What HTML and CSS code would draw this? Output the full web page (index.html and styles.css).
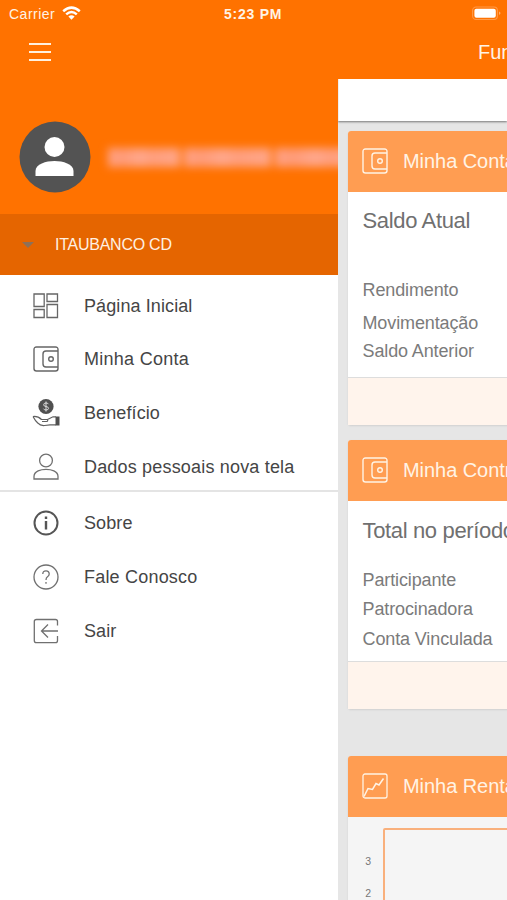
FILE: index.html
```html
<!DOCTYPE html>
<html lang="pt-BR">
<head>
<meta charset="utf-8">
<title>Minha Conta</title>
<link rel="stylesheet" href="styles.css">
</head>
<body>
<svg class="defs" width="0" height="0" aria-hidden="true">
  <symbol id="wallet" viewBox="0 0 26 26"><g fill="none" stroke="currentColor" stroke-width="1.400"><path d="M25 5V3.500Q25 1 22.500 1H3.500Q1 1 1 3.500V22.500Q1 25 3.500 25H22.500Q25 25 25 22.500V5H13Q10 5 10 8V18Q10 21 13 21H25"/><circle cx="18" cy="13" r="2.300"/></g></symbol>
</svg>
<div class="screen">
  <header class="top">
    <div class="status">
      <span class="carrier">Carrier</span>
      <svg class="wifi" width="19" height="14" viewBox="0 0 19 14"><g fill="none" stroke="#fff" stroke-width="2.500"><path d="M1.200 5.200Q9.500 -2 17.800 5.200"/><path d="M4.200 8.400Q9.500 3.600 14.800 8.400"/></g><path fill="#fff" d="M6.400 10.500Q9.500 7.800 12.600 10.500L9.500 13.700Z"/></svg>
      <span class="time">5:23 PM</span>
      <svg class="battery" width="30" height="15" viewBox="0 0 30 15"><rect x=".6" y="1" width="24.800" height="12.500" rx="3.500" fill="none" stroke="#ff9a48" stroke-width="1.100"/><rect x="2.400" y="2.800" width="21.400" height="8.900" rx="2" fill="#fff"/><path fill="#ffad68" d="M27 5.500Q30 7.200 27 9Z"/></svg>
    </div>
    <div class="bar">
      <svg width="24" height="20" viewBox="0 0 24 20"><path d="M1 2H23M1 10H23M1 18H23" stroke="#fff0df" stroke-width="2"/></svg>
      <span class="title">Fundação</span>
    </div>
  </header>
  <div class="body">
    <aside class="drawer">
      <div class="profile">
        <svg class="avatar" width="72" height="72" viewBox="0 0 72 72"><circle cx="36" cy="36" r="35.500" fill="#535353"/><circle cx="35.500" cy="26" r="10" fill="#fff"/><path fill="#fff" d="M16.500 55V50C16.500 43 27 40 35.500 40S54.500 43 54.500 50V55Z"/></svg>
        <div class="name"><i class="w1"></i><i class="w2"></i><i class="w3"></i></div>
      </div>
      <div class="plan"><i class="caret"></i><span>ITAUBANCO CD</span></div>
      <ul class="menu">
        <li><svg width="28" height="28" viewBox="0 0 28 28"><g fill="none" stroke="#666" stroke-width="1.300"><path d="M2 2H12.200V14.500H2ZM15 2H25.500V9.500H15ZM2 17.500H12.200V25.500H2ZM15 12.500H25.500V25.500H15Z"/></g></svg><span class="t1">Página Inicial</span></li>
        <li><svg class="wal" width="26" height="26"><use href="#wallet"/></svg><span class="t2">Minha Conta</span></li>
        <li><svg width="28" height="30" viewBox="0 0 28 30"><circle cx="14" cy="8.500" r="7.600" fill="#505050"/><path d="M16.500 6.200Q16 5 14 5Q11.700 5 11.700 6.800Q11.700 8.300 14 8.500Q16.500 8.800 16.500 10.300Q16.500 12 14 12Q12 12 11.500 10.700M14 3.500V13.500" fill="none" stroke="#ddd" stroke-width="1"/><path d="M1 18.500C5 18 7 19 9.500 21.500H15Q16.500 22.500 15 23.500H10M15.500 21.500L21 18.800H24M1 18.500Q3 22.500 6 25.200Q8 27.800 12.500 27.500L18 26.800H24" fill="none" stroke="#606060" stroke-width="1.200"/><path fill="#505050" d="M23.500 18.500H27.500V27.500H23.500Z"/></svg><span class="t3">Benefício</span></li>
        <li><svg width="28" height="28" viewBox="0 0 28 28"><g fill="none" stroke="#707070" stroke-width="1.300"><circle cx="14" cy="7.500" r="6.400"/><path d="M2 26V23.500C2 18 9 16.300 14 16.300S26 18 26 23.500V26Z"/></g></svg><span class="t4">Dados pessoais nova tela</span></li>
      </ul>
      <div class="divider"></div>
      <ul class="menu lower">
        <li><svg width="26" height="26" viewBox="0 0 26 26"><circle cx="13" cy="13" r="11.500" fill="none" stroke="#555" stroke-width="2"/><path fill="#555" d="M11.800 6.500H14.200V9H11.800ZM11.800 11H14.200V19.500H11.800Z"/></svg><span class="t5">Sobre</span></li>
        <li><svg width="26" height="26" viewBox="0 0 26 26"><g fill="none" stroke="#707070" stroke-width="1.300"><circle cx="13" cy="13" r="12"/><path d="M9.800 10Q9.800 6.800 13 6.800T16.200 10Q16.200 11.600 14.500 12.700Q13 13.700 13 16M13 18V19.700"/></g></svg><span class="t6">Fale Conosco</span></li>
        <li><svg width="26" height="26" viewBox="0 0 26 26"><path d="M24.500 7.500V3.500Q24.500 1.500 22.500 1.500H3.500Q1.300 1.500 1.300 3.500V22.500Q1.300 24.700 3.500 24.700H22.500Q24.500 24.700 24.500 22.500V18M25 13H8.500M15 6.500L8.500 13L15 19.500" fill="none" stroke="#707070" stroke-width="1.300"/></svg><span class="t7">Sair</span></li>
      </ul>
    </aside>
    <main class="page">
      <div class="tabs"></div>
      <section class="card">
        <h2><svg width="26" height="26"><use href="#wallet"/></svg><span>Minha Conta</span></h2>
        <div class="content balance">
          <p class="lead l1">Saldo Atual</p>
          <p class="r1">Rendimento</p><p class="r2">Movimentação</p><p class="r3">Saldo Anterior</p>
        </div>
        <div class="foot"></div>
      </section>
      <section class="card second">
        <h2><svg width="26" height="26"><use href="#wallet"/></svg><span>Minha Contribuição</span></h2>
        <div class="content total">
          <p class="lead l2">Total no período</p>
          <p class="r4">Participante</p><p class="r5">Patrocinadora</p><p class="r6">Conta Vinculada</p>
        </div>
        <div class="foot"></div>
      </section>
      <section class="card third">
        <h2><svg width="26" height="26" viewBox="0 0 26 26"><g fill="none" stroke="currentColor" stroke-width="1.300"><rect x="1" y="1" width="24" height="24" rx="2"/><path stroke-width="1.500" d="M2 23.500L6 15.500L10.500 16.500L14 10.500L17 12L21.500 5.500"/></g></svg><span>Minha Rentabilidade</span></h2>
        <div class="chart"><div class="axis"><span>3</span><span>2</span></div><div class="plot"></div></div>
      </section>
    </main>
  </div>
</div>
</body>
</html>
```
FILE: styles.css
```css
* { box-sizing: border-box; }
body { margin: 0; font-family: "Liberation Sans", Arial, sans-serif; }
h2, p, ul { margin: 0; padding: 0; font-weight: 400; }
span, p { white-space: nowrap; }
.defs { display: block; }
.screen { width: 507px; height: 900px; overflow: hidden; display: flex; flex-direction: column; }
.top { height: 79px; flex: none; background: #ff7200; color: #fff3e6; }
.status { height: 28px; display: flex; align-items: center; padding: 0 5px 0 9px; }
.carrier { width: 53px; font-size: 14px; letter-spacing: .5px; }
.time { margin-left: 143px; width: 68px; font-size: 14px; font-weight: 700; letter-spacing: .75px; }
.wifi { flex: none; margin-top: -2px; }
.battery { margin-left: auto; margin-top: -2px; flex: none; }
.bar { height: 48px; display: flex; align-items: center; padding-left: 28px; overflow: hidden; }
.bar svg { flex: none; }
.title { margin-left: 426px; font-size: 20px; }
.body { flex: 1; min-height: 0; display: flex; }
.drawer { width: 338px; flex: none; background: #fff; overflow: hidden; }
.profile { height: 135px; background: #ff7200; display: flex; align-items: center; padding: 21px 0 0 19px; }
.avatar { flex: none; }
.name { display: flex; gap: 4px; margin-left: 17px; filter: blur(4px); }
.name i { height: 19px; background: linear-gradient(90deg, #ffa184, #ff9a76 20%, #ffa78c 45%, #ff9e7c 60%, #ffa689); flex: none; }
.w1 { width: 72px; }
.w2 { width: 87px; }
.w3 { width: 90px; }
.plan { height: 61px; background: #e56500; color: #fff0e2; display: flex; align-items: center; padding-left: 22px; font-size: 16px; }
.plan span { margin-left: 21px; letter-spacing: -.25px; }
.caret { border: 6px solid transparent; border-top: 6px solid #8d7058; border-bottom: 0; }
.menu { list-style: none; padding-top: 4px; }
.menu li { height: 54px; display: flex; align-items: center; color: #454545; font-size: 18px; }
.menu li:nth-child(n+2) { padding-bottom: 2px; }
.menu.lower li:nth-child(n+2) { padding-bottom: 0; }
.menu li svg { width: 28px; margin-left: 32px; flex: none; }
.menu.lower svg { margin-top: -1px; }
.menu .wal { color: #666; }
.menu span { margin-left: 24px; letter-spacing: .1px; }
.menu .t2 { letter-spacing: .27px; }
.menu .t4 { letter-spacing: .18px; }
.menu .t6 { letter-spacing: .2px; }
.divider { height: 2px; margin-top: -5px; background: #e4e4e4; }
.page { flex: 1; min-width: 0; background: #e6e6e6; overflow: hidden; }
.tabs { height: 42px; background: #fff; border-left: 1px solid #eee; box-shadow: 0 1px 2px #777; }
.card { width: 320px; margin: 10px 0 0 10px; background: #fff; border-radius: 3px; box-shadow: 0 1px 2px #d0d0d0; }
.card h2 { height: 61px; background: #ff9d52; color: #fff3e5; border-radius: 3px 3px 0 0; display: flex; align-items: center; padding-left: 14px; font-size: 20px; }
.card h2 svg { flex: none; margin-top: -1px; }
.card h2 span { margin-left: 15px; letter-spacing: -.05px; }
.content { padding-left: 14.500px; color: #7b7b7b; font-size: 18px; line-height: 28px; letter-spacing: -.12px; }
.content .lead { font-size: 22px; color: #707070; letter-spacing: -.35px; }
.balance { height: 185px; padding-top: 15px; }
.balance .lead { margin-bottom: 41px; }
.r1 { margin-bottom: 5px; }
.foot { height: 48px; background: #fff4ec; border-top: 1px solid #ddd; }
.second { margin-top: 15px; }
.total { height: 160px; padding-top: 15px; line-height: 29.500px; }
.total .lead { margin-bottom: 20px; }
.third { margin-top: 47px; background: #f5f5f5; }
.chart { display: flex; height: 160px; padding-top: 11px; }
.axis { width: 35px; padding-top: 18px; text-align: right; font-size: 10.500px; color: #777; }
.axis span { display: block; height: 31.500px; line-height: 31.500px; padding-right: 12px; }
.plot { width: 270px; border: 2px solid #f9b07c; border-radius: 2px; }
```
